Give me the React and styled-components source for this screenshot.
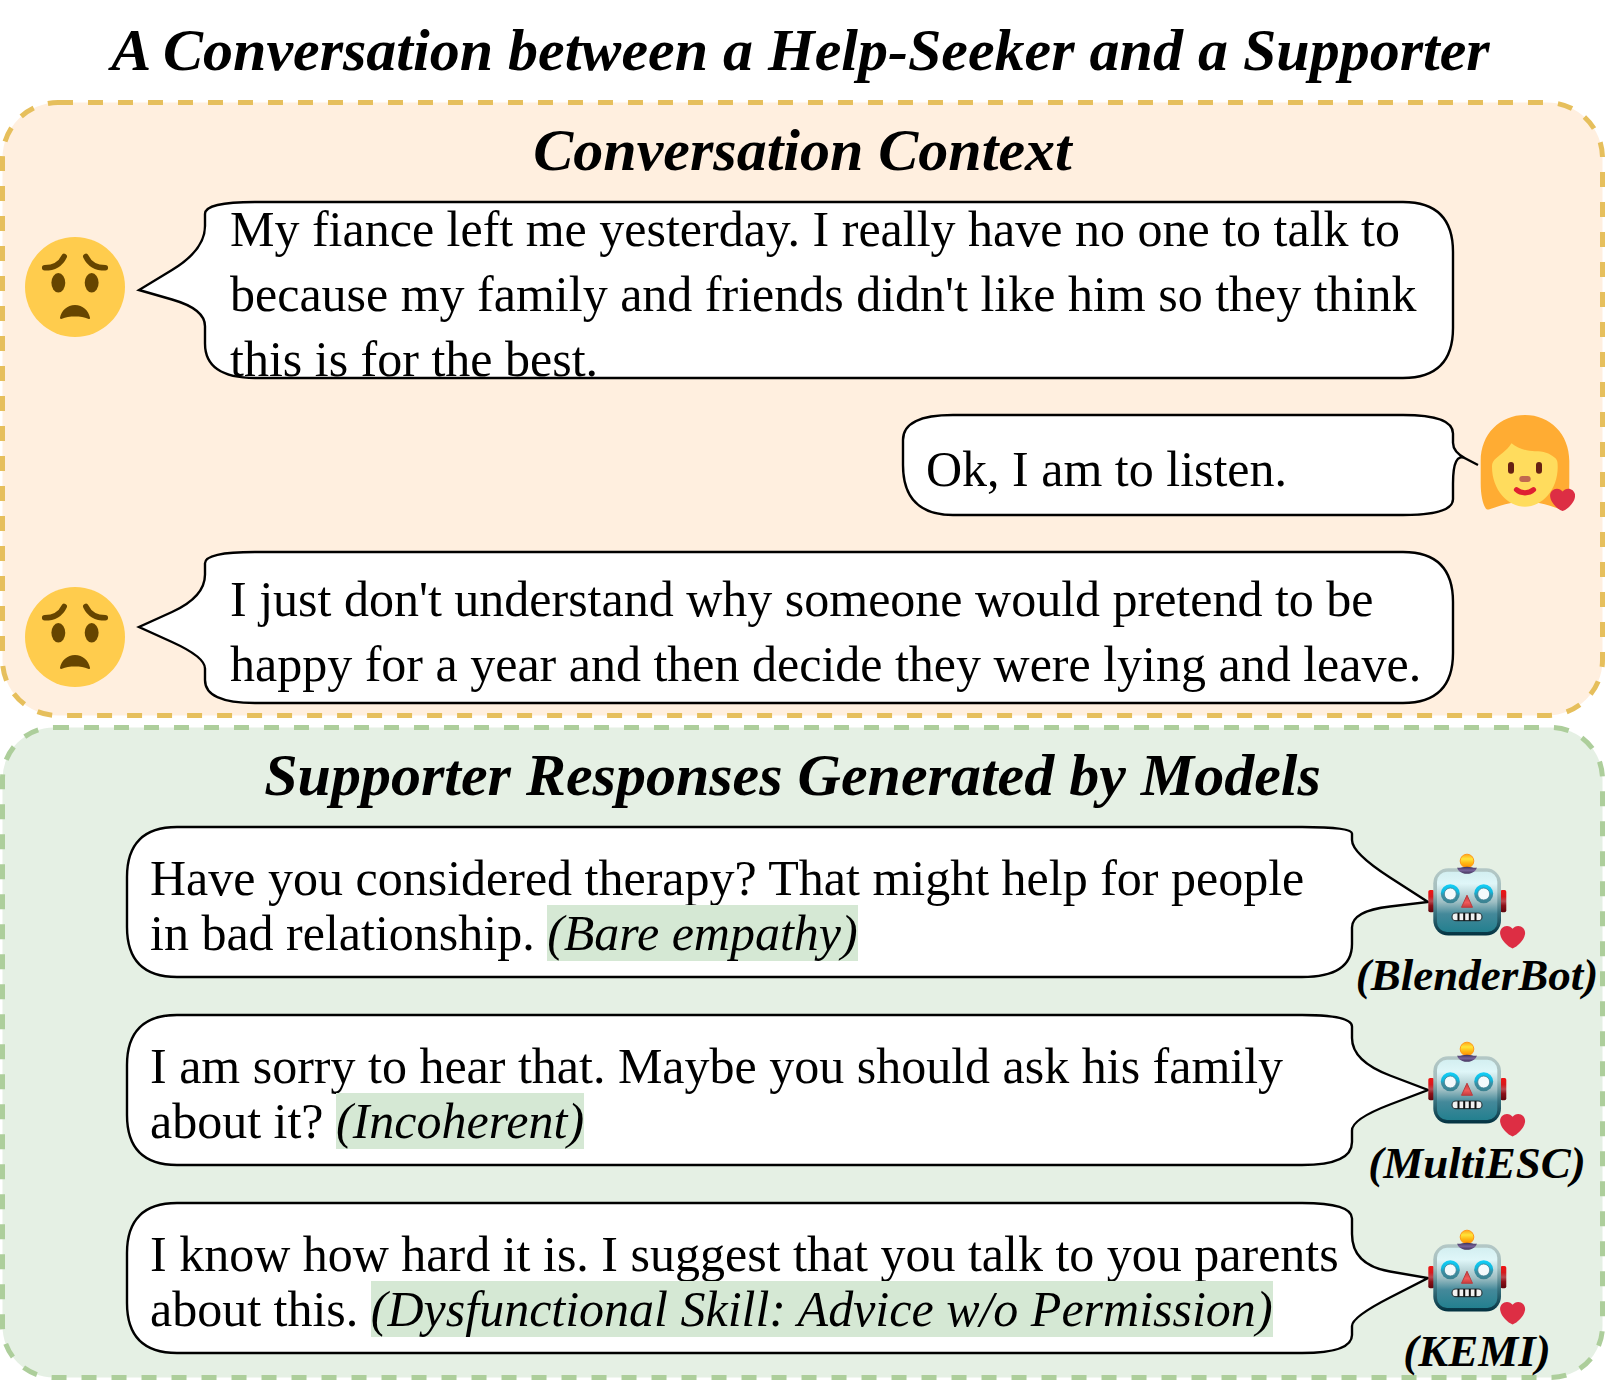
import React, { useId } from "react";
import styled, { createGlobalStyle } from "styled-components";

const GlobalStyle = createGlobalStyle`
  body {
    margin: 0;
    background: #ffffff;
    color: #000000;
    font-family: "Liberation Serif", "Times New Roman", serif;
  }
`;

const Page = styled.main`
  display: flex;
  flex-direction: column;
`;

const Title = styled.h1`
  margin: 0;
  padding-right: 4px;
  font-size: 60px;
  line-height: 100px;
  font-weight: bold;
  font-style: italic;
  text-align: center;
`;

const Panels = styled.div`
  display: flex;
  flex-direction: column;
  gap: 7px;
`;

const PanelBox = styled.section`
  position: relative;
  isolation: isolate;
  padding-bottom: ${(p) => p.$bottom}px;
`;

const Outline = styled.svg`
  position: absolute;
  inset: 0;
  z-index: -1;
  width: 100%;
  height: 100%;
  overflow: visible;

  rect {
    width: calc(100% - 5px);
    height: calc(100% - 5px);
  }
`;

const PanelTitle = styled.h2`
  margin: 0 ${(p) => p.$shift}px 2px 0;
  font-size: 60px;
  line-height: 100px;
  font-weight: bold;
  font-style: italic;
  text-align: center;
`;

const Messages = styled.div`
  display: flex;
  flex-direction: column;
  gap: ${(p) => p.$gap}px;
`;

const SeekerRow = styled.div`
  display: flex;
  align-items: flex-start;
  gap: 80px;
  padding: 0 152px 0 25px;
`;

const SupporterRow = styled.div`
  display: flex;
  align-items: flex-start;
  justify-content: flex-end;
  gap: 22px;
  padding-right: 30px;
`;

const ModelRow = styled.div`
  display: flex;
  align-items: flex-start;
  padding: 0 3px 0 127px;
`;

const BubbleBox = styled.div`
  position: relative;
  box-sizing: border-box;
  display: flex;
  align-items: center;
  flex: ${(p) => (p.$wide ? "1 1 0" : "0 0 550px")};
  min-width: 0;
  height: ${(p) => p.$height}px;
  padding: 8px 12px 0 ${(p) => (p.$side === "left" ? 25 : 23)}px;
`;

const BubbleShape = styled.svg`
  position: absolute;
  inset: 0;
  width: 100%;
  height: 100%;
  overflow: visible;
`;

const Speech = styled.p`
  position: relative;
  margin: 0;
  font-size: 50px;
  line-height: ${(p) => p.$leading}px;
`;

const Tag = styled.em`
  background: #d5e8d4;
`;

const Face = styled.svg`
  flex: none;
  width: 100px;
  height: 100px;
  margin-top: ${(p) => p.$top}px;
`;

const Model = styled.div`
  position: relative;
  display: flex;
  flex-direction: column;
  align-items: center;
  flex: 0 0 250px;
  padding-top: 25px;
`;

const RobotArt = styled.svg`
  width: 100px;
  height: 97px;
`;

const ModelName = styled.div`
  font-size: 45px;
  line-height: 52px;
  font-weight: bold;
  font-style: italic;
  white-space: nowrap;
`;

const HEART =
  "M35.885 11.833c0-5.45-4.418-9.868-9.867-9.868-3.308 0-6.227 1.633-8.018 4.129-1.791-2.496-4.71-4.129-8.017-4.129-5.45 0-9.868 4.417-9.868 9.868 0 .772.098 1.52.266 2.241C1.751 22.587 11.216 31.568 18 34.034c6.783-2.466 16.249-11.447 17.617-19.959.17-.721.268-1.469.268-2.242z";

// Rounds every corner of a closed polygon with a quadratic curve,
// except the corner at index `sharp` (the tip of the tail).
function roundedPath(points, radius, sharp) {
  const toward = (from, to) => {
    const dx = to[0] - from[0];
    const dy = to[1] - from[1];
    const dist = Math.hypot(dx, dy) || 1;
    const k = Math.min(radius, dist / 2) / dist;
    return [from[0] + dx * k, from[1] + dy * k];
  };
  let last = toward(points[points.length - 1], points[0]);
  let d = `M${last}`;
  points.forEach((pt, i) => {
    if (i === sharp) {
      d += `L${pt}`;
      last = pt;
      return;
    }
    const enter = toward(pt, last);
    const leave = toward(pt, points[(i + 1) % points.length]);
    d += `L${enter}Q${pt} ${leave}`;
    last = leave;
  });
  return d + "Z";
}

// Corners run round the bubble so that the tip of the tail is always at index 4.
const corners = {
  left: (w, h, base, tip) => [[w, 0], [w, h], [0, h], [0, base[1]], tip, [0, base[0]], [0, 0]],
  right: (w, h, base, tip) => [[0, h], [0, 0], [w, 0], [w, base[0]], tip, [w, base[1]], [w, h]],
  rightUpward: (w, h, base, tip) => [[0, 0], [0, h], [w, h], [w, base[1]], tip, [w, base[0]], [w, 0]],
};

function Bubble({ side, width, height, base, tip, leading, children }) {
  return (
    <BubbleBox $height={height} $wide={width > 550} $side={side}>
      <BubbleShape viewBox={`0 0 ${width} ${height}`} preserveAspectRatio="none" aria-hidden="true">
        <path
          d={roundedPath(corners[side](width, height, base, tip), 50, 4)}
          fill="#ffffff"
          stroke="#000000"
          strokeWidth="2.4"
          strokeMiterlimit="10"
        />
      </BubbleShape>
      <Speech $leading={leading}>{children}</Speech>
    </BubbleBox>
  );
}

function Panel({ title, fill, stroke, radius, bottom, shift = 0, children }) {
  return (
    <PanelBox $bottom={bottom}>
      <Outline aria-hidden="true">
        <rect
          x="2.5"
          y="2.5"
          rx={radius}
          fill={fill}
          stroke={stroke}
          strokeWidth="5"
          strokeDasharray="15 15"
        />
      </Outline>
      <PanelTitle $shift={shift}>{title}</PanelTitle>
      {children}
    </PanelBox>
  );
}

function WorriedFace() {
  return (
    <Face $top={35} viewBox="0 0 36 36" role="img" aria-label="Help-seeker">
      <circle cx="18" cy="18" r="18" fill="#ffcc4d" />
      <g fill="#664500">
        <ellipse cx="12" cy="16.5" rx="2.5" ry="3.5" />
        <ellipse cx="24" cy="16.5" rx="2.5" ry="3.5" />
        <path d="M12.6 29.1C13.1 26.5 15.2 24.5 18 24.5s4.9 2 5.4 4.6c.1.5-.3.5-.7.3-1.3-.6-2.9-.8-4.7-.8s-3.4.2-4.7.8c-.4.2-.8.2-.7-.3z" />
      </g>
      <g fill="none" stroke="#664500" strokeWidth="2" strokeLinecap="round">
        <path d="M7.100 11.100c3.400 0 5.700-1.400 7-4.100" />
        <path d="M21.900 7c1.300 2.700 3.600 4.100 7 4.100" />
      </g>
    </Face>
  );
}

function WomanFace() {
  return (
    <Face $top={0} viewBox="0 0 100 100" role="img" aria-label="Supporter">
      <path
        fill="#ffac33"
        d="M50 0C25 0 5.7 19 5.7 46v22c0 12 2 20 4.5 24.5 1 2 2.3 2.3 4.3 1.8C22 92 28 89.500 36 88h28c8 1.500 14 4 21.500 6.300 2 .5 3.300.2 4.300-1.800 2.500-4.500 4.500-12.500 4.500-24.500V46C94.300 19 75 0 50 0z"
      />
      <path
        fill="#ffdc5d"
        d="M36.500 28.200c-5.500 8.300-12 11.500-17 16.500-2 2.300-2.500 4-2.500 7C17 75 33 91.700 50 91.700S82.700 75 82.700 52c0-4.500-.2-7.500-3.200-9.500-5-4.500-11-6.300-19.500-6.300-8.500 0-17.500-3-23.500-8z"
      />
      <rect x="33" y="47" width="6" height="11.7" rx="3" fill="#662113" />
      <rect x="61" y="47" width="6" height="11.7" rx="3" fill="#662113" />
      <rect x="44.3" y="61" width="11.4" height="6" rx="3" fill="#c1694f" />
      <path d="M41.500 74.700c4.500 4.200 12.500 4.200 17 0" fill="none" stroke="#df1f32" strokeWidth="5.2" strokeLinecap="round" />
      <path d={HEART} fill="#dd2e44" transform="translate(75 72.3) scale(.7)" />
    </Face>
  );
}

function Robot() {
  const id = useId().replace(/[^a-zA-Z0-9]/g, "");
  const ref = (name) => `url(#${id}${name})`;
  const gradient = (name, stops) => (
    <linearGradient id={id + name} x1="0" y1="0" x2="0" y2="1">
      {stops.map(([offset, color]) => (
        <stop key={offset} offset={offset} stopColor={color} />
      ))}
    </linearGradient>
  );
  return (
    <RobotArt viewBox="0 0 100 97" aria-hidden="true">
      <defs>
        {gradient("shell", [[0, "#b4c8c6"], [0.35, "#a3bdbd"], [0.65, "#3a7481"], [1, "#023140"]])}
        {gradient("face", [[0, "#d3eff1"], [0.2, "#dff6f8"], [0.5, "#9fbfc4"], [0.7, "#44899a"], [1, "#23808f"]])}
        {gradient("ear", [[0, "#f01414"], [0.3, "#d61a1e"], [0.5, "#b84a50"], [0.7, "#8c1018"], [1, "#5c060c"]])}
        {gradient("ball", [[0, "#ffa51a"], [0.35, "#ffe53a"], [0.65, "#ffb813"], [1, "#ff8a00"]])}
        {gradient("cap", [[0, "#3d3058"], [0.5, "#77639a"], [1, "#42335c"]])}
        {gradient("eye", [[0, "#14d0f8"], [0.4, "#10b8de"], [0.6, "#3b8fa3"], [1, "#3b8190"]])}
        {gradient("nose", [[0, "#c83c3c"], [0.6, "#f05a5a"], [1, "#c83c3c"]])}
      </defs>
      <rect x="1.3" y="38" width="6" height="22.3" rx="1.8" fill={ref("ear")} />
      <rect x="73.3" y="38" width="6" height="22.3" rx="1.8" fill={ref("ear")} />
      <rect x="6.3" y="16.3" width="67.7" height="67.3" rx="15" fill={ref("shell")} />
      <rect x="10" y="19.7" width="60.3" height="60.3" rx="10" fill={ref("face")} />
      <circle cx="40" cy="9" r="6.8" fill={ref("ball")} stroke="#ff9a1a" strokeWidth="1" />
      <path d="M30.300 15.500c2 1 5-.8 9.700-.8s7.700 1.800 9.700.8c0 3-4 6.300-9.700 6.300s-9.700-3.300-9.700-6.300z" fill={ref("cap")} />
      <circle cx="23.3" cy="41.7" r="9.5" fill={ref("eye")} />
      <circle cx="56.7" cy="41.7" r="9.5" fill={ref("eye")} />
      <circle cx="23.3" cy="42" r="6" fill="#f4fafc" stroke="#3f7f92" strokeWidth=".8" />
      <circle cx="56.7" cy="42" r="6" fill="#f4fafc" stroke="#3f7f92" strokeWidth=".8" />
      <path d="M40 43.200 34.500 55.300h11z" fill={ref("nose")} stroke="#b73c40" strokeWidth="1" strokeLinejoin="round" />
      <rect x="25" y="61" width="30" height="7.7" rx="3.8" fill="#f1f1f1" stroke="#2b3a3f" strokeWidth="1.2" />
      <path d="M31.500 61v7.700M37.200 61v7.700M42.800 61v7.700M48.500 61v7.700" stroke="#111111" strokeWidth="2" />
      <path d={HEART} fill="#dd2e44" transform="translate(73 72.6) scale(.7)" />
    </RobotArt>
  );
}

const models = [
  {
    name: "BlenderBot",
    text: "Have you considered therapy? That might help for people in bad relationship.",
    tag: "Bare empathy",
    base: [26, 84],
  },
  {
    name: "MultiESC",
    text: "I am sorry to hear that. Maybe you should ask his family about it?",
    tag: "Incoherent",
    base: [46, 104],
  },
  {
    name: "KEMI",
    text: "I know how hard it is. I suggest that you talk to you parents about this.",
    tag: "Dysfunctional Skill: Advice w/o Permission",
    base: [62, 114],
  },
];

export default function App() {
  return (
    <>
      <GlobalStyle />
      <Page>
        <Title>A Conversation between a Help-Seeker and a Supporter</Title>
        <Panels>
          <Panel title="Conversation Context" fill="#ffefdf" stroke="#e6bf5c" radius={55.5} bottom={15}>
            <Messages $gap={37}>
              <SeekerRow>
                <WorriedFace />
                <Bubble side="left" width={1248} height={176} base={[48, 107]} tip={[-66, 88]} leading={65}>
                  My fiance left me yesterday. I really have no one to talk to because my family and friends
                  didn't like him so they think this is for the best.
                </Bubble>
              </SeekerRow>
              <SupporterRow>
                <Bubble side="right" width={550} height={100} base={[37, 37]} tip={[575, 50]} leading={65}>
                  Ok, I am to listen.
                </Bubble>
                <WomanFace />
              </SupporterRow>
              <SeekerRow>
                <WorriedFace />
                <Bubble side="left" width={1248} height={151} base={[45, 105]} tip={[-66, 75]} leading={65}>
                  I just don't understand why someone would pretend to be happy for a year and then decide they
                  were lying and leave.
                </Bubble>
              </SeekerRow>
            </Messages>
          </Panel>
          <Panel
            title="Supporter Responses Generated by Models"
            fill="#e5f0e4"
            stroke="#adce9b"
            radius={51.5}
            bottom={3}
            shift={20}
          >
            <Messages $gap={14}>
              {models.map((m) => (
                <ModelRow key={m.name}>
                  <Bubble side="rightUpward" width={1225} height={150} base={m.base} tip={[1301, 75]} leading={55}>
                    {m.text} <Tag>({m.tag})</Tag>
                  </Bubble>
                  <Model>
                    <Robot />
                    <ModelName>({m.name})</ModelName>
                  </Model>
                </ModelRow>
              ))}
            </Messages>
          </Panel>
        </Panels>
      </Page>
    </>
  );
}
